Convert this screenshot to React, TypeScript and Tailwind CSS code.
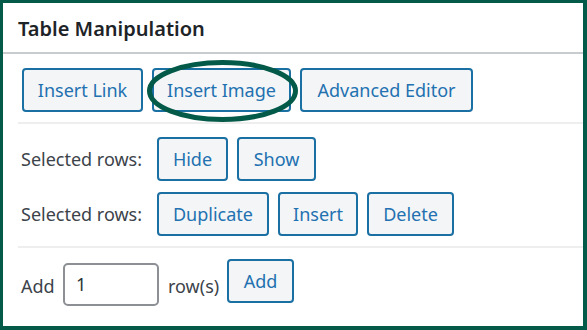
import React from "react";

const font = { fontFamily: '"Noto Sans", "Open Sans", sans-serif' };

function Btn({ w, children }: { w: string; children: React.ReactNode }) {
  return (
    <button
      className={`${w} h-[44px] shrink-0 rounded-[4px] border-2 border-[#1a6fa3] bg-[#f4f5f6] text-[18px] leading-none text-[#2271b1] flex items-center justify-center`}
    >
      {children}
    </button>
  );
}

export default function App() {
  return (
    <div
      style={font}
      className="relative w-[587px] h-[330px] box-border border-l-[3px] border-t-[3px] border-r-4 border-b-4 border-[#045a49] bg-white overflow-hidden"
    >
      <div className="h-[49px] flex items-center pl-[15px] pt-[2px] text-[20px] font-semibold text-[#1d2327]">
        Table Manipulation
      </div>
      <div className="h-[2px] bg-[#c9cccf]" />
      <div className="pl-[15px]">
        <div className="flex gap-[9px] pl-[4px] pt-[14px] pb-[10px]">
          <Btn w="w-[121px]">Insert Link</Btn>
          <Btn w="w-[139px]">Insert Image</Btn>
          <Btn w="w-[173px]">Advanced Editor</Btn>
        </div>
        <div className="h-[2px] bg-[#eeeeee]" />
        <div className="pt-[13px] pb-[10px] flex flex-col gap-[11px]">
          <div className="flex items-center gap-[9px] pl-[3px]">
            <span className="w-[127px] shrink-0 text-[18px] text-[#3c434a]">Selected rows:</span>
            <Btn w="w-[71px]">Hide</Btn>
            <Btn w="w-[79px]">Show</Btn>
          </div>
          <div className="flex items-center gap-[9px] pl-[3px]">
            <span className="w-[127px] shrink-0 text-[18px] text-[#3c434a]">Selected rows:</span>
            <Btn w="w-[112px]">Duplicate</Btn>
            <Btn w="w-[80px]">Insert</Btn>
            <Btn w="w-[87px]">Delete</Btn>
          </div>
        </div>
        <div className="h-[2px] bg-[#eeeeee]" />
        <div className="flex items-start pl-[3px] pt-[11px]">
          <span className="mt-[14px] w-[42px] shrink-0 text-[18px] text-[#3c434a]">Add</span>
          <div className="mt-[4px] w-[96px] h-[43px] shrink-0 rounded-[5px] border-2 border-[#8c8f94] bg-white flex items-center pl-[11px] text-[18px] text-[#2c3338]">
            1
          </div>
          <span className="mt-[14px] ml-[9px] w-[59px] shrink-0 text-[18px] text-[#3c434a]">row(s)</span>
          <Btn w="w-[67px]">Add</Btn>
        </div>
      </div>
      <svg
        className="absolute pointer-events-none left-0 top-0"
        width="580"
        height="323"
        viewBox="0 0 580 323"
      >
        <ellipse cx="219.5" cy="88" rx="73" ry="28.5" fill="none" stroke="#045a49" strokeWidth="5" />
      </svg>
    </div>
  );
}
